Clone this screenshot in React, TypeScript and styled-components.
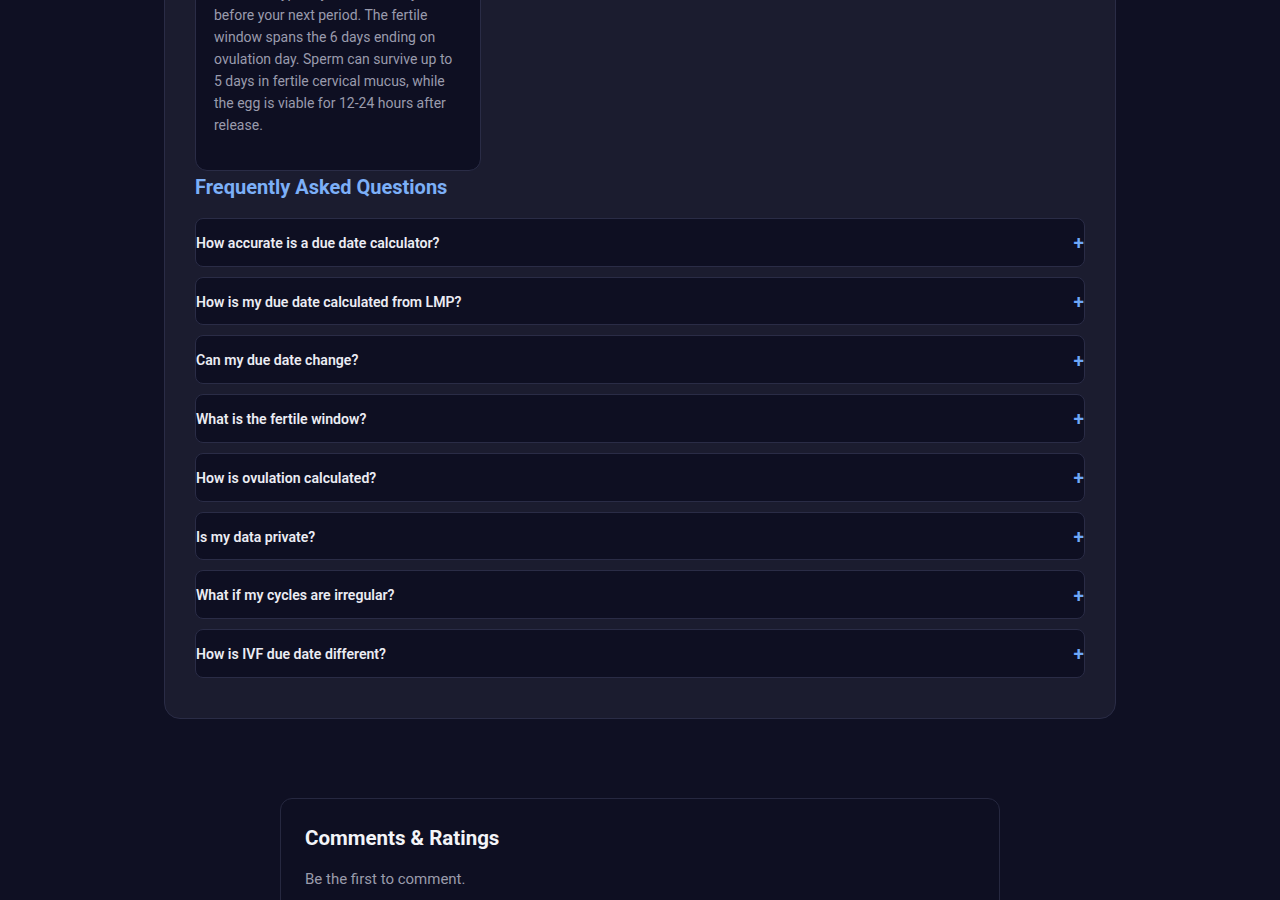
import { useLayoutEffect, useRef } from "react"
import styled, { createGlobalStyle } from "styled-components"

const GlobalStyle = createGlobalStyle`
  html, body {
    margin: 0;
    padding: 0;
    background: #0f1023;
    font-family: Roboto, "Noto Sans", "Liberation Sans", sans-serif;
    -webkit-font-smoothing: antialiased;
  }
  * {
    box-sizing: border-box;
  }
`

const Viewport = styled.div`
  height: 100vh;
  overflow: hidden;
  background: #0f1023;
`

const Page = styled.div`
  padding: 40px 0 120px;
`

const MainCard = styled.section`
  max-width: 952px;
  margin: 0 auto;
  padding: 30px;
  background: #1b1c2f;
  border: 1px solid #2a2c46;
  border-radius: 16px;
`

const SectionTitle = styled.h2`
  margin: 0 0 18px;
  font-size: 20px;
  line-height: 26px;
  font-weight: 700;
  color: #7cafF7;
`

const InfoGrid = styled.div`
  display: grid;
  grid-template-columns: repeat(3, 1fr);
  gap: 16px;
  margin-bottom: 3px;
`

const InfoCard = styled.div`
  background: #0e0f22;
  border: 1px solid #2a2c46;
  border-radius: 12px;
  padding: 18px;
`

const InfoTitle = styled.h3`
  margin: 0 0 10px;
  font-size: 16px;
  font-weight: 600;
  color: #e9eaf2;
`

const InfoText = styled.p`
  margin: 0 0 16px;
  font-size: 14px;
  line-height: 22px;
  color: #9a9bad;
`

const FaqList = styled.div`
  display: flex;
  flex-direction: column;
  gap: 10px;
  margin-bottom: 10px;
`

const FaqItem = styled.div`
  background: #0e0f22;
  border: 1px solid #2a2c46;
  border-radius: 8px;
`

const FaqButton = styled.button`
  display: flex;
  width: 100%;
  align-items: center;
  justify-content: space-between;
  padding: 15px 0 13px;
  background: none;
  border: none;
  font-family: inherit;
  font-size: 14.1px;
  line-height: 18.7px;
  font-weight: 600;
  color: #ebecf3;
  text-align: left;
  cursor: pointer;
`

const Plus = styled.span`
  font-size: 19px;
  font-weight: 600;
  line-height: 18px;
  color: #6ea8f8;
`

const CommentsCard = styled.section`
  max-width: 720px;
  min-height: 260px;
  margin: 79px auto 0;
  padding: 24px;
  background: #0e0f22;
  border: 1px solid #262840;
  border-radius: 12px;
`

const CommentsTitle = styled.h2`
  margin: 0 0 15px;
  font-size: 20.5px;
  line-height: 30px;
  font-weight: 700;
  color: #f3f4f8;
`

const CommentsText = styled.p`
  margin: 0;
  font-size: 15px;
  line-height: 22px;
  color: #9a9bab;
`

const infoCards = [
  {
    title: "Due Date (Naegele's Rule)",
    text: "Your estimated due date is calculated by adding 280 days (40 weeks) to the first day of your last menstrual period, assuming a 28-day cycle.",
  },
  {
    title: "Conception Date",
    text: "Conception usually happens around two weeks after the start of your last period, close to the day of ovulation.",
  },
  {
    title: "Gestational Age",
    text: "Gestational age is counted from your last menstrual period, so it is about two weeks longer than the actual age of the baby.",
  },
  {
    title: "Ovulation & Fertile Window",
    text: "Ovulation typically occurs 14 days before your next period. The fertile window spans the 6 days ending on ovulation day. Sperm can survive up to 5 days in fertile cervical mucus, while the egg is viable for 12-24 hours after release.",
  },
]

const faqs = [
  "How accurate is a due date calculator?",
  "How is my due date calculated from LMP?",
  "Can my due date change?",
  "What is the fertile window?",
  "How is ovulation calculated?",
  "Is my data private?",
  "What if my cycles are irregular?",
  "How is IVF due date different?",
]

export default function App() {
  const viewportRef = useRef<HTMLDivElement>(null)
  const faqTitleRef = useRef<HTMLHeadingElement>(null)

  // the reference is scrolled down the page: bring the FAQ heading to its place
  useLayoutEffect(() => {
    const viewport = viewportRef.current
    const title = faqTitleRef.current
    if (!viewport || !title) return
    const offset =
      title.getBoundingClientRect().top - viewport.getBoundingClientRect().top + viewport.scrollTop
    viewport.scrollTop = offset - 174
  }, [])

  return (
    <>
      <GlobalStyle />
      <Viewport ref={viewportRef}>
        <Page>
          <MainCard>
            <SectionTitle>How It Works</SectionTitle>
            <InfoGrid>
              {infoCards.map((card) => (
                <InfoCard key={card.title}>
                  <InfoTitle>{card.title}</InfoTitle>
                  <InfoText>{card.text}</InfoText>
                </InfoCard>
              ))}
            </InfoGrid>
            <SectionTitle ref={faqTitleRef}>Frequently Asked Questions</SectionTitle>
            <FaqList>
              {faqs.map((q) => (
                <FaqItem key={q}>
                  <FaqButton type="button">
                    {q}
                    <Plus>+</Plus>
                  </FaqButton>
                </FaqItem>
              ))}
            </FaqList>
          </MainCard>
          <CommentsCard>
            <CommentsTitle>Comments &amp; Ratings</CommentsTitle>
            <CommentsText>Be the first to comment.</CommentsText>
          </CommentsCard>
        </Page>
      </Viewport>
    </>
  )
}
